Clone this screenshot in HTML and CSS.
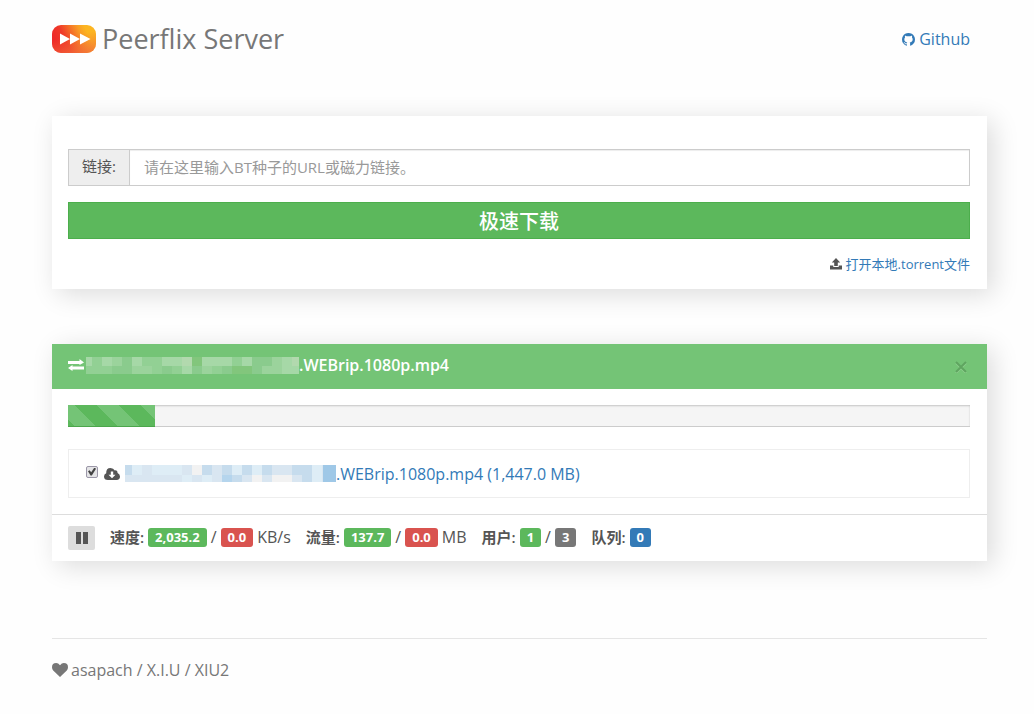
FILE: index.html
```html
<!DOCTYPE html>
<html lang="zh-CN">
<head>
<meta charset="utf-8">
<meta name="viewport" content="width=device-width, initial-scale=1">
<title>Peerflix Server</title>
<link rel="stylesheet" href="styles.css">
</head>
<body>
<div class="container">
  <header class="site-header">
    <h1 class="brand">
      <svg class="brand-logo" viewBox="0 0 44 28" aria-hidden="true">
        <defs>
          <linearGradient id="logo-fill" x1="0" y1="0.3" x2="1" y2="0">
            <stop offset="0" stop-color="#ee2a29"/>
            <stop offset="0.22" stop-color="#ef3a29"/>
            <stop offset="0.6" stop-color="#f99c26"/>
            <stop offset="0.75" stop-color="#fcb521"/>
            <stop offset="1" stop-color="#fcb521"/>
          </linearGradient>
          <linearGradient id="logo-shade" x1="0.4" y1="0.4" x2="0.6" y2="1">
            <stop offset="0" stop-color="#f26a35" stop-opacity="0"/>
            <stop offset="1" stop-color="#f2703a" stop-opacity="0.7"/>
          </linearGradient>
        </defs>
        <rect width="44" height="28" rx="9" fill="url(#logo-fill)"/>
        <rect width="44" height="28" rx="9" fill="url(#logo-shade)"/>
        <path d="M8 8.500 18 14 8 19.500zM18 8.500 28 14 18 19.500zM28 8.500 38.500 14 28 19.500z" fill="#fff"/>
      </svg>
      <span>Peerflix Server</span>
    </h1>
    <a class="icon-link" href="#github">
      <svg class="icon" viewBox="128 128 1536 1536" aria-hidden="true"><path d="M896 128q209 0 385.500 103t279.500 279.500 103 385.500q0 251-146.500 451.500t-378.500 277.500q-27 5-40-7t-13-30q0-3 .5-76.500t.5-134.500q0-97-52-142 57-6 102.500-18t94-39 81-66.500 53-105 20.500-150.500q0-119-79-206 37-91-8-204-28-9-81 11t-92 44l-38 24q-93-26-192-26t-192 26q-16-11-42.500-27t-83.500-38.500-85-13.500q-45 113-8 204-79 87-79 206 0 85 20.500 150t52.500 105 80.500 67 94 39 102.500 18q-39 36-49 103-21 10-45 15t-57 5-65.500-21.500-55.500-62.500q-19-32-48.500-52t-49.500-24l-20-3q-21 0-29 4.500t-5 11.500 9 14 13 12l7 5q22 10 43.500 38t31.500 51l10 23q13 38 44 61.500t67 30 69.500 7 55.500-3.500l23-4q0 38 .5 88.500t.5 54.500q0 18-13 30t-40 7q-232-77-378.500-277.500t-146.500-451.500q0-209 103-385.500t279.500-279.500 385.500-103z"/></svg>
      <span>Github</span>
    </a>
  </header>

  <main>
    <form class="card download-form">
      <div class="input-group">
        <label class="input-label" for="link">链接:</label>
        <input class="input-field" id="link" type="text" placeholder="请在这里输入BT种子的URL或磁力链接。">
      </div>
      <button class="submit" type="button">极速下载</button>
      <div class="upload">
        <svg class="icon-small" viewBox="0 0 12 12" aria-hidden="true"><path d="M6 0 10.200 4.600H7.800V8H4.200V4.600H1.800zM0 7.600H3.300V9H8.700V7.600H12V11.500H0z"/></svg>
        <a href="#upload">打开本地.torrent文件</a>
      </div>
    </form>

    <section class="card torrent">
      <header class="torrent-head">
        <svg class="icon-wide" viewBox="0 0 16 12" aria-hidden="true"><path d="M0 2H11.500V0L16 3.500 11.500 6V5H0zM16 7.500H4.500V6L0 9 4.500 12V10.500H16z"/></svg>
        <h2 class="torrent-name">
          <svg class="mosaic mosaic-head" viewBox="0 0 213 17" preserveAspectRatio="none" shape-rendering="crispEdges" aria-hidden="true">
            <rect width="213" height="17" fill="#92d094"/>
            <path fill="#a6d8a7" d="M0 0h6v9H0zM16 0h10v9H16zM46 0h10v9H46zM76 0h20v9H76zM116 0h30v9H116zM156 0h10v9H156zM193 0h20v9H193zM96 9h10v8H96zM196 9h17v8H196z"/>
            <path fill="#8acb8d" d="M36 0h10v17H36zM166 0h20v9H166zM26 9h10v8H26zM76 9h10v8H76zM106 9h10v8H106zM136 9h10v8H136zM166 9h10v8H166z"/>
            <path fill="#9bd39c" d="M26 0h10v9H26zM186 0h10v9H186zM46 9h20v8H46zM116 9h10v8H116zM176 9h20v8H176z"/>
            <path fill="#b2d9ae" d="M96 0h10v9H96zM206 0h7v9H206z"/>
            <path fill="#82c67c" d="M106 0h10v9H106zM146 9h20v8H146z"/>
          </svg><span>.WEBrip.1080p.mp4</span>
        </h2>
        <button class="close" type="button" aria-label="关闭">
          <svg viewBox="0 0 12 12" aria-hidden="true"><path d="M1 2 11 12M11 2 1 12" stroke="#90d08f"/><path d="M1 1 11 11M11 1 1 11" stroke="#5fa560"/></svg>
        </button>
      </header>
      <div class="torrent-body">
        <div class="progress" role="progressbar" aria-valuemin="0" aria-valuemax="1447" aria-valuenow="138" aria-label="流量"><div class="progress-bar" style="width: 9.600%"></div></div>
        <div class="file">
          <input class="check" type="checkbox" checked aria-label=".WEBrip.1080p.mp4">
          <svg class="icon-wide" viewBox="0 0 16 12" aria-hidden="true"><path fill-rule="evenodd" d="M4 12Q0 12 0 8.500 0 6.200 2.200 5.200 2 0 6.500 0 9.500 0 10.800 2.500 13.600 1.800 13.600 5 16 6 16 8.600 16 12 12.500 12zM6.800 3.500V6.700H4.500L8 10.300 11.500 6.700H9.200V3.500z"/></svg>
          <a class="file-name" href="#file">
            <svg class="mosaic mosaic-file" viewBox="0 0 211 17" preserveAspectRatio="none" shape-rendering="crispEdges" aria-hidden="true">
              <rect width="211" height="17" fill="#d9e6f1"/>
              <path fill="#c6dced" d="M0 0h7v10H0zM77 0h10v10H77zM97 0h10v10H97zM117 0h10v10H117zM137 0h10v10H137zM167 0h10v10H167zM177 0h10v17H177zM107 10h10v7H107z"/>
              <path fill="#deedf6" d="M7 0h10v10H7zM27 0h30v10H27zM107 0h10v10H107zM127 0h10v10H127zM187 0h10v17H187zM57 10h10v7H57zM77 10h10v7H77z"/>
              <path fill="#f2f2f2" d="M67 0h10v10H67zM127 10h10v7H127zM147 10h20v7H147z"/>
              <path fill="#b5d5ed" d="M97 10h10v7H97z"/>
              <path fill="#9fc8e7" d="M198 0h13v17H198z"/>
            </svg><span>.WEBrip.1080p.mp4 (1,447.0 MB)</span>
          </a>
        </div>
      </div>
      <footer class="stats">
        <button class="pause" type="button" aria-label="暂停"><svg viewBox="0 0 12 12" aria-hidden="true"><path d="M0 0H5V12H0zM7 0H12V12H7z"/></svg></button>
        <div class="stat"><strong>速度:</strong><span class="badge green">2,035.2</span><span>/</span><span class="badge red">0.0</span><span>KB/s</span></div>
        <div class="stat"><strong>流量:</strong><span class="badge green">137.7</span><span>/</span><span class="badge red">0.0</span><span>MB</span></div>
        <div class="stat"><strong>用户:</strong><span class="badge green">1</span><span>/</span><span class="badge gray">3</span></div>
        <div class="stat"><strong>队列:</strong><span class="badge blue">0</span></div>
      </footer>
    </section>
  </main>

  <footer class="site-footer">
    <svg class="icon-heart" viewBox="0 0 16 14" aria-hidden="true"><path d="M8 14 1.200 7.600Q0 6.200 0 4.200 0 0 4.200 0 6.300 0 8 2.200 9.700 0 11.800 0 16 0 16 4.200 16 6.200 14.800 7.600z"/></svg>
    <span>asapach / X.I.U / XIU2</span>
  </footer>
</div>
</body>
</html>
```
FILE: styles.css
```css
* {
  box-sizing: border-box;
}

body {
  margin: 0;
  background: #fefefe;
  color: #555;
  font: 15px/20px "Open Sans", "Noto Sans", "Noto Sans CJK SC", sans-serif;
}

svg {
  display: block;
  flex: none;
  fill: currentColor;
}

a {
  color: #337ab7;
  text-decoration: none;
}

button,
input {
  font: inherit;
}

.container {
  padding: 20px 47px 32px 52px;
}

.site-header {
  display: flex;
  align-items: center;
  justify-content: space-between;
  height: 38px;
  margin-bottom: 58px;
  padding-right: 17px;
}

.brand {
  display: flex;
  align-items: center;
  gap: 6px;
  margin: 0;
  color: #777;
  font-size: 27px;
  font-weight: 400;
  line-height: 38px;
}

.brand-logo {
  width: 44px;
  height: 28px;
}

.icon-link {
  display: flex;
  align-items: center;
  gap: 4px;
  font-size: 16px;
}

.icon {
  width: 13px;
  height: 13px;
}

.card {
  background: #fff;
  box-shadow: 6px 5px 25px rgba(0, 0, 0, 0.14);
}

.download-form {
  padding: 33px 17px 15px 16px;
  margin-bottom: 55px;
}

.input-group {
  display: flex;
  height: 37px;
  margin-bottom: 16px;
  border: 1px solid #ccc;
}

.input-label {
  padding: 6px 13px;
  border-right: 1px solid #ccc;
  background: #eee;
}

.input-field {
  flex: 1;
  min-width: 0;
  padding: 0 14px 2px;
  border: 0;
  background: #fff;
  box-shadow: inset 0 1px 1px rgba(0, 0, 0, 0.075);
  color: #555;
}

.input-field::placeholder {
  color: #999;
  opacity: 1;
}

.submit {
  display: block;
  width: 100%;
  height: 37px;
  padding: 2px 0 0;
  border: 1px solid #4cae4c;
  background: #5cb85c;
  color: #fff;
  font-size: 20px;
  font-weight: 500;
}

.upload {
  display: flex;
  align-items: center;
  justify-content: flex-end;
  gap: 4px;
  margin-top: 15px;
  font-size: 13px;
}

.icon-small {
  width: 12px;
  height: 12px;
}

.torrent-head {
  display: flex;
  align-items: center;
  height: 45px;
  padding: 0 20px 3px 16px;
  background: #74c476;
  color: #fff;
}

.icon-wide {
  width: 16px;
  height: 12px;
}

.torrent-name {
  display: flex;
  flex: 1;
  align-items: center;
  margin: 0 0 0 2px;
  font-size: 16px;
  font-weight: 600;
}

.mosaic {
  height: 17px;
}

.mosaic-head {
  width: 213px;
}

.mosaic-file {
  width: 211px;
}

.close {
  padding: 3px 0 0;
  border: 0;
  background: none;
}

.close svg {
  width: 12px;
  height: 12px;
  stroke-width: 2;
}

.torrent-body {
  padding: 16px 17px 16px 16px;
}

.progress {
  height: 22px;
  margin-bottom: 22px;
  background: #f5f5f5;
  box-shadow: inset 0 -1px 0 #ccc, inset 0 1px 2px rgba(0, 0, 0, 0.2);
}

.progress-bar {
  height: 100%;
  background: #5cb85c repeating-linear-gradient(45deg, #5cb85c 0 5px, #74c476 5px 20px, #5cb85c 20px 31px);
  box-shadow: inset 0 -1px 0 #4ca64c;
}

.file {
  display: flex;
  align-items: center;
  height: 49px;
  padding-left: 17px;
  border: 1px solid #eee;
}

.check {
  position: relative;
  width: 12px;
  height: 12px;
  margin: 0 6px 4px 0;
  border: 1px solid #9b97a8;
  border-radius: 2px;
  background: #e4e4e6;
  appearance: none;
}

.check:checked::before {
  content: "";
  position: absolute;
  inset: 1px;
  background: #444;
  clip-path: polygon(0 48%, 20% 35%, 40% 60%, 80% 0, 100% 15%, 48% 100%, 32% 100%);
}

.file-name {
  display: flex;
  align-items: center;
  margin-left: 5px;
  font-size: 16px;
}

.stats {
  display: flex;
  flex-wrap: wrap;
  align-items: center;
  gap: 4px 15px;
  padding: 11px 16px;
  border-top: 1px solid #ddd;
}

.pause {
  padding: 6px 7px 6px 8px;
  border: 0;
  border-radius: 2px;
  background: #ddd;
  color: #555;
}

.pause svg {
  width: 12px;
  height: 12px;
}

.stat {
  display: flex;
  align-items: center;
  gap: 4px;
  padding-bottom: 2px;
  font-size: 16px;
}

.stat strong {
  font-size: 15px;
  font-weight: 600;
}

.badge {
  padding: 0 7px;
  border-radius: 3px;
  color: #fff;
  font-size: 13px;
  font-weight: 700;
  line-height: 19px;
}

.green {
  background: #5cb85c;
}

.red {
  background: #d9534f;
}

.gray {
  background: #777;
}

.blue {
  background: #337ab7;
}

.site-footer {
  display: flex;
  align-items: center;
  gap: 3px;
  margin-top: 77px;
  padding-top: 21px;
  border-top: 1px solid #e5e5e5;
  color: #777;
  font-size: 16px;
}

.icon-heart {
  width: 16px;
  height: 14px;
}
```
